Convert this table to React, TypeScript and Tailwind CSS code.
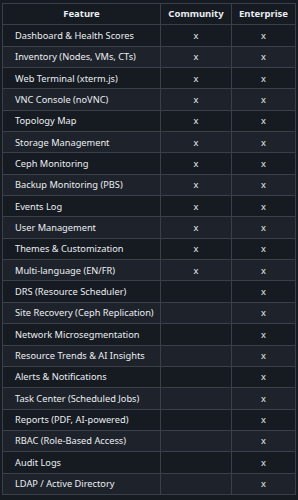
import React from "react";

type Row = { name: string; community: boolean };

const rows: Row[] = [
  { name: "Dashboard & Health Scores", community: true },
  { name: "Inventory (Nodes, VMs, CTs)", community: true },
  { name: "Web Terminal (xterm.js)", community: true },
  { name: "VNC Console (noVNC)", community: true },
  { name: "Topology Map", community: true },
  { name: "Storage Management", community: true },
  { name: "Ceph Monitoring", community: true },
  { name: "Backup Monitoring (PBS)", community: true },
  { name: "Events Log", community: true },
  { name: "User Management", community: true },
  { name: "Themes & Customization", community: true },
  { name: "Multi-language (EN/FR)", community: true },
  { name: "DRS (Resource Scheduler)", community: false },
  { name: "Site Recovery (Ceph Replication)", community: false },
  { name: "Network Microsegmentation", community: false },
  { name: "Resource Trends & AI Insights", community: false },
  { name: "Alerts & Notifications", community: false },
  { name: "Task Center (Scheduled Jobs)", community: false },
  { name: "Reports (PDF, AI-powered)", community: false },
  { name: "RBAC (Role-Based Access)", community: false },
  { name: "Audit Logs", community: false },
  { name: "LDAP / Active Directory", community: false },
];

const cell = "border border-[#3b4048] h-[21.35px] leading-none";

const App: React.FC = () => {
  return (
    <div
      className="w-[298px] h-[500px] bg-[#161a21] pt-[3px] pl-[2px] text-[#eaeef2] text-[9.25px]"
      style={{ fontFamily: '"Noto Sans", "Open Sans", sans-serif' }}
    >
      <table className="border-collapse w-[293px] table-fixed">
        <colgroup>
          <col className="w-[158px]" />
          <col className="w-[71px]" />
          <col className="w-[64px]" />
        </colgroup>
        <thead>
          <tr className="bg-[#161a21]">
            <th className={`${cell} text-center font-bold text-[9.5px] px-3`}>Feature</th>
            <th className={`${cell} text-center font-bold text-[9.5px]`}>Community</th>
            <th className={`${cell} text-center font-bold text-[9.5px]`}>Enterprise</th>
          </tr>
        </thead>
        <tbody>
          {rows.map((row, i) => (
            <tr key={row.name} className={i % 2 === 1 ? "bg-[#1e222a]" : "bg-[#161a21]"}>
              <td className={`${cell} pl-3 whitespace-nowrap`}>{row.name}</td>
              <td className={`${cell} text-center`}>{row.community ? "x" : ""}</td>
              <td className={`${cell} text-center`}>x</td>
            </tr>
          ))}
        </tbody>
      </table>
    </div>
  );
};

export default App;
